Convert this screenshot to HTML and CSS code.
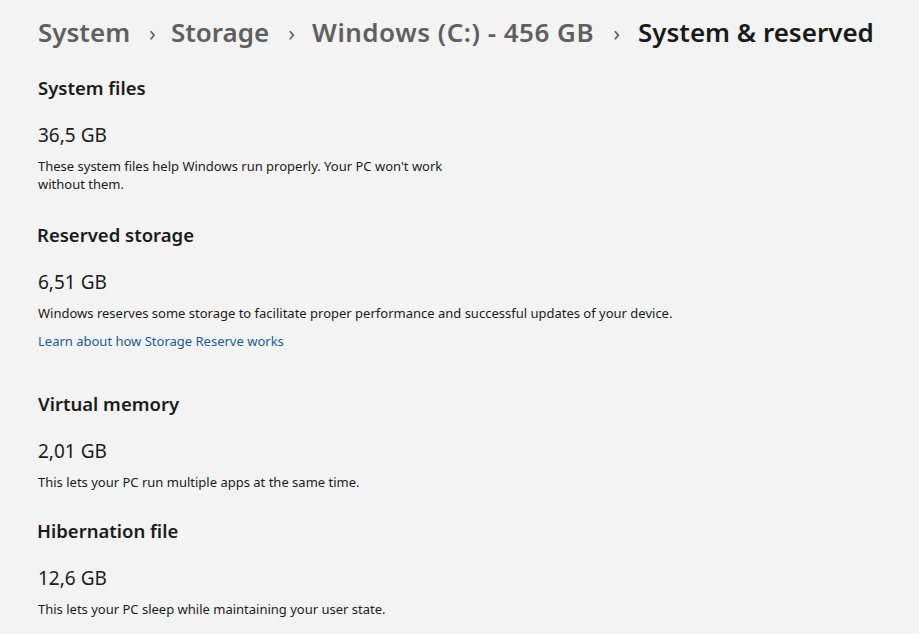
FILE: index.html
```html
<!DOCTYPE html>
<html lang="en">
<head>
  <meta charset="UTF-8">
  <title>System &amp; reserved</title>
  <link rel="stylesheet" href="styles.css">
</head>
<body>
  <!-- 路徑導覽 -->
  <nav class="breadcrumb">
    <span class="crumb">System</span>
    <span class="chevron">&#8250;</span>
    <span class="crumb">Storage</span>
    <span class="chevron">&#8250;</span>
    <span class="crumb wide">Windows (C:) - 456 GB</span>
    <span class="chevron">&#8250;</span>
    <span class="crumb current">System &amp; reserved</span>
  </nav>

  <section class="group first">
    <h2>System files</h2>
    <div class="size">36,5 GB</div>
    <p class="desc narrow">These system files help Windows run properly. Your PC won't work without them.</p>
  </section>

  <section class="group reserved">
    <h2>Reserved storage</h2>
    <div class="size">6,51 GB</div>
    <p class="desc">Windows reserves some storage to facilitate proper performance and successful updates of your device.</p>
    <a class="link" href="#">Learn about how Storage Reserve works</a>
  </section>

  <section class="group">
    <h2>Virtual memory</h2>
    <div class="size">2,01 GB</div>
    <p class="desc">This lets your PC run multiple apps at the same time.</p>
  </section>

  <section class="group last">
    <h2>Hibernation file</h2>
    <div class="size">12,6 GB</div>
    <p class="desc">This lets your PC sleep while maintaining your user state.</p>
  </section>
</body>
</html>
```

FILE: styles.css
```css
body {
  margin: 0;
  padding: 12px 38px 0;
  background: #f3f3f3;
  color: #1b1b1b;
  font-family: "Noto Sans", "Open Sans", sans-serif;
  overflow: hidden;
}
.breadcrumb {
  display: flex;
  align-items: center;
  height: 40px;
  font-size: 26px;
  font-weight: 600;
  color: #5f5f5f;
  white-space: nowrap;
}
.chevron {
  font-size: 22px;
  margin: 0 15px 0 19px;
  font-weight: 400;
}
.crumb.wide {
  letter-spacing: 0.5px;
  margin-left: 2px;
}
.crumb.current {
  color: #1a1a1a;
  margin-left: 3px;
}
.group {
  margin-top: 30px;
}
.group.first {
  margin-top: 24px;
}
.group.last {
  margin-top: 28px;
}
.group h2 {
  margin: 0;
  font-size: 18.5px;
  font-weight: 600;
  line-height: 24px;
}
.size {
  margin-top: 23px;
  font-size: 19px;
  line-height: 24px;
}
.desc {
  margin: 10px 0 0;
  font-size: 13px;
  line-height: 18px;
}
.desc.narrow {
  max-width: 430px;
}
.reserved {
  padding-bottom: 12px;
}
.reserved h2,
.last h2 {
  margin-left: -1px;
}
.link {
  display: block;
  margin-top: 10px;
  color: #1a5a9a;
  font-size: 13px;
  line-height: 18px;
  text-decoration: none;
}
```
